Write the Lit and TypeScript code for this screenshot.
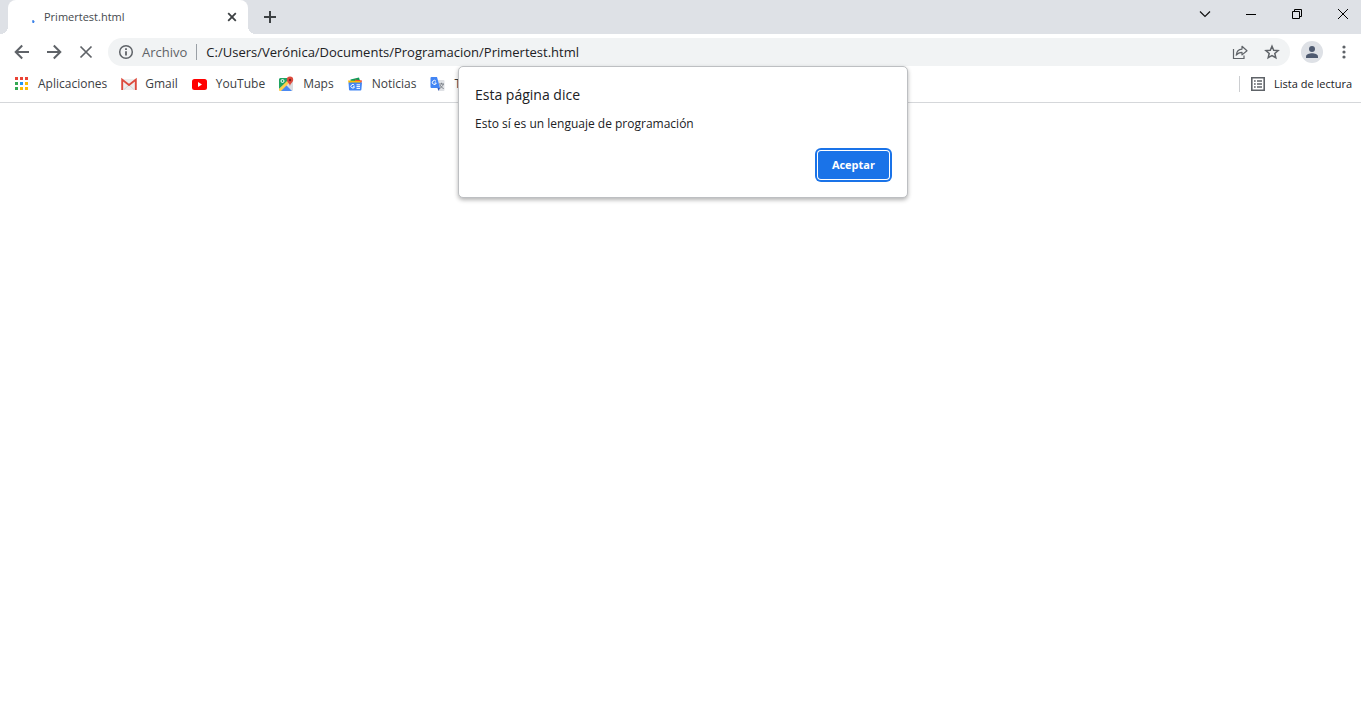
import { LitElement, html, css, svg } from "lit";
import { customElement, state } from "lit/decorators.js";

const icon = (size: number, body: unknown) => html`<svg
  class="icon" width=${size} height=${size} viewBox="0 0 ${size} ${size}" aria-hidden="true">${body}</svg>`;

const spinner = icon(16, svg`<path d="M12 11.500l1.500-.5 1 1.500-.5 1.500h-1.500z" fill="#3b82e8"/>`);
const tabClose = icon(16, svg`<path d="M4.200 4.200l7.600 7.600M11.800 4.200l-7.600 7.600" stroke="#3c4043" stroke-width="1.800"/>`);
const plus = icon(16, svg`<path d="M8 2v12M2 8h12" stroke="#3c4043" stroke-width="2"/>`);
const chevron = icon(16, svg`<path d="M3 5.500l5 5 5-5" fill="none" stroke="#111" stroke-width="1.200"/>`);
const minimize = icon(16, svg`<path d="M3 8.500h10" stroke="#000"/>`);
const restore = icon(16, svg`<path d="M3.500 5.500h7v7h-7zM5.500 5V3.500h7v7H11" fill="none" stroke="#000"/>`);
const windowClose = icon(16, svg`<path d="M3 3l10 10M13 3L3 13" stroke="#000"/>`);
const back = icon(16, svg`<path d="M15 8H2M8.200 1.500L1.700 8l6.500 6.500" fill="none" stroke="#5f6368" stroke-width="2"/>`);
const forward = icon(16, svg`<path d="M1 8h13M7.800 1.500L14.300 8l-6.500 6.500" fill="none" stroke="#5f6368" stroke-width="2"/>`);
const stop = icon(16, svg`<path d="M2.500 2.500l11 11M13.500 2.500l-11 11" stroke="#5f6368" stroke-width="1.700"/>`);
const info = icon(16, svg`<circle cx="8" cy="8" r="6.300" fill="none" stroke="#5f6368" stroke-width="1.500"/>
  <path d="M8 7.200v4.300M8 4.300v1.600" stroke="#5f6368" stroke-width="1.800"/>`);
const share = icon(16, svg`<path d="M1.500 5v9.500h10.500v-3" fill="none" stroke="#5f6368" stroke-width="1.200"/>
  <path d="M4.200 11.200C4.600 7.300 6.700 5.300 10 5.100V2.300L15 6.700l-5 4.200V8.300C7.500 8.300 5.800 9 4.200 11.200z" fill="none" stroke="#5f6368" stroke-width="1.200" stroke-linejoin="round"/>`);
const star = icon(16, svg`<path d="M8 2.200l1.700 4 4.400.4-3.300 2.900 1 4.200L8 11.500l-3.800 2.200 1-4.200-3.300-2.900 4.400-.4z" fill="none" stroke="#5f6368" stroke-width="1.500"/>`);
const avatar = icon(22, svg`<circle cx="11" cy="11" r="11" fill="#dee1e6"/>
  <circle cx="11" cy="8" r="3" fill="#4e5a70"/><path d="M5 17v-1.500c0-2 3.500-3.200 6-3.200s6 1.200 6 3.200V17z" fill="#4e5a70"/>`);
const dots = icon(16, svg`<g fill="#5f6368"><circle cx="8" cy="3" r="1.600"/><circle cx="8" cy="8" r="1.600"/><circle cx="8" cy="13" r="1.600"/></g>`);
const list = icon(16, svg`<path d="M1.800 1.800h12.400v12.400H1.800z" fill="none" stroke="#5f6368" stroke-width="1.600"/>
  <path d="M4 5h1.700M7 5h5M4 8h1.700M7 8h5M4 11h1.700M7 11h5" stroke="#5f6368" stroke-width="1.500"/>`);

const appColors = ["#ea4335", "#ea4335", "#ea4335", "#34a853", "#2196f3", "#fbbc04", "#34a853", "#fbbc04", "#fbbc04"];
const apps = icon(16, svg`${appColors.map((c, i) => svg`<rect x=${1 + (i % 3) * 5} y=${1 + Math.floor(i / 3) * 5} width="3" height="3" fill=${c}/>`)}`);
const gmail = icon(16, svg`<path d="M1 3h14v11H1z" fill="#eee"/><path d="M3 13.500L8 9l5 4.500" fill="none" stroke="#d5d5d5"/>
  <path d="M1.200 14V3.600L8 9l6.800-5.400V14" fill="none" stroke="#dd4b3e" stroke-width="1.900"/>`);
const youtube = icon(16, svg`<rect x="0" y="3" width="15" height="11" rx="2.500" fill="#f00"/><path d="M6 6v5l4-2.500z" fill="#fff"/>`);
const maps = icon(16, svg`<rect x="0" y="2" width="14" height="13" rx="1.500" fill="#dadce0"/>
  <path d="M1.500 2H12L0 13V3.500A1.500 1.500 0 0 1 1.500 2z" fill="#1fa463"/>
  <path d="M1 15l6-6 6 6z" fill="#4a89f3"/><path d="M0 13l8-8 2 2-8 8H1a1 1 0 0 1-1-1z" fill="#ffd04b"/>
  <circle cx="3.500" cy="5" r="1.500" fill="none" stroke="#fff"/>
  <path d="M11 10.500c0-3-3.200-3.800-3.200-6.700a3.200 3.200 0 0 1 6.400 0c0 2.900-3.200 3.700-3.200 6.700z" fill="#de4b3d"/><circle cx="11" cy="4" r="1.200" fill="#7b231e"/>`);
const news = icon(16, svg`<path d="M2.500 3.500L11 1.500l1.500 5-10 1z" fill="#0c9d58"/><path d="M7 3.500l7 1-1 4-6-2z" fill="#ea4335"/>
  <path d="M0 4.500l12.500.5V8H1z" fill="#fbbc04"/><path d="M.5 6.500h13.500l-.6 7a1 1 0 0 1-1 1H2a1 1 0 0 1-1-1z" fill="#4285f4"/>
  <path d="M6.300 9.300a1.800 1.800 0 1 0 .2 1.500H5M8.500 8.800H12M8.500 10.600H12M8.500 12.400H12" fill="none" stroke="#fff"/>`);
const translate = icon(16, svg`<path d="M6 4h7.500a1 1 0 0 1 1 1v9a1 1 0 0 1-1 1H9z" fill="#dfe1e5"/>
  <path d="M9 8h5M11.500 6.800V8M13.300 8c-.5 2-2 3.500-3.500 4.300M10 9c.8 1.700 2 2.800 3.700 3.500" fill="none" stroke="#7b8087"/>
  <path d="M1.500 1H7l3 11H1.500a1 1 0 0 1-1-1V2a1 1 0 0 1 1-1z" fill="#4285f4"/><path d="M7.500 12H10l-1.500 3z" fill="#3057b8"/>
  <path d="M6 5.300a2 2 0 1 0 .3 1.700H4.500" fill="none" stroke="#fff"/>`);

const bookmarks = [
  { label: "Aplicaciones", image: apps },
  { label: "Gmail", image: gmail },
  { label: "YouTube", image: youtube },
  { label: "Maps", image: maps },
  { label: "Noticias", image: news },
  { label: "T", image: translate },
];

@customElement("app-root")
export class AppRoot extends LitElement {
  static styles = css`
    :host {
      display: flex;
      flex-direction: column;
      position: relative;
      min-height: 100vh;
      background: #fff;
      color: #202124;
      font: 12px/16px "Open Sans", "Noto Sans", sans-serif;
    }
    * { box-sizing: border-box; }
    button {
      display: flex;
      align-items: center;
      justify-content: center;
      margin: 0;
      padding: 0;
      border: 0;
      background: none;
      color: inherit;
      font: inherit;
    }
    .icon { display: block; flex: none; }
    .tabs { display: flex; height: 34px; overflow: hidden; background: #dee1e6; }
    .foot { width: 8px; align-self: flex-end; height: 8px; }
    .foot-left { background: radial-gradient(circle at 0 0, #dee1e6 8px, #fff 8px); }
    .foot-right { background: radial-gradient(circle at 100% 0, #dee1e6 8px, #fff 8px); }
    .tab {
      display: flex;
      align-items: center;
      gap: 8px;
      width: 240px;
      padding: 0 8px 0 12px;
      background: #fff;
      border-radius: 8px 8px 0 0;
      color: #45494d;
      font-size: 11px;
    }
    .tab-title { flex: 1; }
    .new-tab { width: 28px; }
    .window-controls { display: flex; margin-left: auto; margin-right: -5px; height: 28px; }
    .window-controls button { width: 46px; }
    .toolbar { display: flex; align-items: center; height: 36px; padding: 0 9px 0 6px; }
    .nav { width: 32px; height: 28px; }
    .address {
      display: flex;
      align-items: center;
      flex: 1;
      height: 28px;
      margin: 0 11px 0 6px;
      padding: 0 10px;
      border-radius: 14px;
      background: #f1f3f4;
      font-size: 13px;
      line-height: 20px;
    }
    .scheme { margin-left: 8px; color: #5f6368; }
    .divider { width: 1px; height: 16px; margin: 0 9px; background: #9aa0a6; }
    .url {
      flex: 1;
      min-width: 0;
      height: 20px;
      padding: 0;
      border: 0;
      outline: 0;
      background: none;
      color: #202124;
      font: inherit;
    }
    .address-actions { display: flex; gap: 16px; }
    .menu { width: 16px; margin-left: 13px; }
    .bookmarks {
      display: flex;
      align-items: center;
      gap: 14px;
      height: 33px;
      padding: 0 9px 4px 14px;
      border-bottom: 1px solid #d5d7da;
    }
    .bookmark {
      display: flex;
      align-items: center;
      gap: 8px;
      color: #3c4043;
      text-decoration: none;
      white-space: nowrap;
    }
    .reading {
      gap: 8px;
      margin-left: auto;
      padding-left: 10px;
      border-left: 1px solid #ccced1;
      color: #202124;
      font-size: 11px;
    }
    .overlay {
      position: absolute;
      top: 66px;
      right: 0;
      left: 5px;
      display: flex;
      justify-content: center;
    }
    .dialog {
      width: 450px;
      padding: 18px 18px 18px 16px;
      border: 1px solid #bdbfc2;
      border-radius: 5px;
      background: #fff;
      box-shadow: 0 2px 4px rgba(0, 0, 0, 0.3);
    }
    .dialog-title { margin: 0; font-size: 14px; line-height: 20px; font-weight: 400; }
    .dialog-text { margin: 11px 0 19px; }
    .dialog-actions { display: flex; justify-content: flex-end; }
    .accept {
      height: 28px;
      padding: 0 14px;
      border-radius: 3px;
      background: #1a73e8;
      box-shadow: 0 0 0 1px #fff, 0 0 0 3px #1a73e8;
      color: #fff;
      font-size: 11px;
      font-weight: 700;
    }
  `;

  @state() private dialogOpen = true;

  private accept() {
    this.dialogOpen = false;
  }

  render() {
    return html`
      <header>
        <div class="tabs">
          <span class="foot foot-left"></span>
          <div class="tab">
            ${spinner}<span class="tab-title">Primertest.html</span>
            <button aria-label="Cerrar pestaña">${tabClose}</button>
          </div>
          <span class="foot foot-right"></span>
          <button class="new-tab" aria-label="Nueva pestaña">${plus}</button>
          <div class="window-controls">
            <button aria-label="Buscar pestañas">${chevron}</button>
            <button aria-label="Minimizar">${minimize}</button>
            <button aria-label="Restaurar">${restore}</button>
            <button aria-label="Cerrar">${windowClose}</button>
          </div>
        </div>
        <nav class="toolbar">
          <button class="nav" aria-label="Atrás">${back}</button>
          <button class="nav" aria-label="Adelante">${forward}</button>
          <button class="nav" aria-label="Detener">${stop}</button>
          <div class="address">
            ${info}<label class="scheme" for="url">Archivo</label><span class="divider"></span>
            <input class="url" id="url" spellcheck="false" value="C:/Users/Verónica/Documents/Programacion/Primertest.html" />
            <div class="address-actions">
              <button aria-label="Compartir">${share}</button>
              <button aria-label="Añadir a marcadores">${star}</button>
            </div>
          </div>
          <button aria-label="Perfil">${avatar}</button>
          <button class="menu" aria-label="Menú">${dots}</button>
        </nav>
        <nav class="bookmarks">
          ${bookmarks.map((b) => html`<a class="bookmark" href="#">${b.image}<span>${b.label}</span></a>`)}
          <button class="reading">${list}<span>Lista de lectura</span></button>
        </nav>
      </header>
      <main></main>
      ${this.dialogOpen
        ? html`<div class="overlay">
            <section class="dialog" role="alertdialog" aria-labelledby="title" aria-describedby="text">
              <h1 class="dialog-title" id="title">Esta página dice</h1>
              <p class="dialog-text" id="text">Esto sí es un lenguaje de programación</p>
              <div class="dialog-actions"><button class="accept" @click=${this.accept}>Aceptar</button></div>
            </section>
          </div>`
        : null}
    `;
  }
}
